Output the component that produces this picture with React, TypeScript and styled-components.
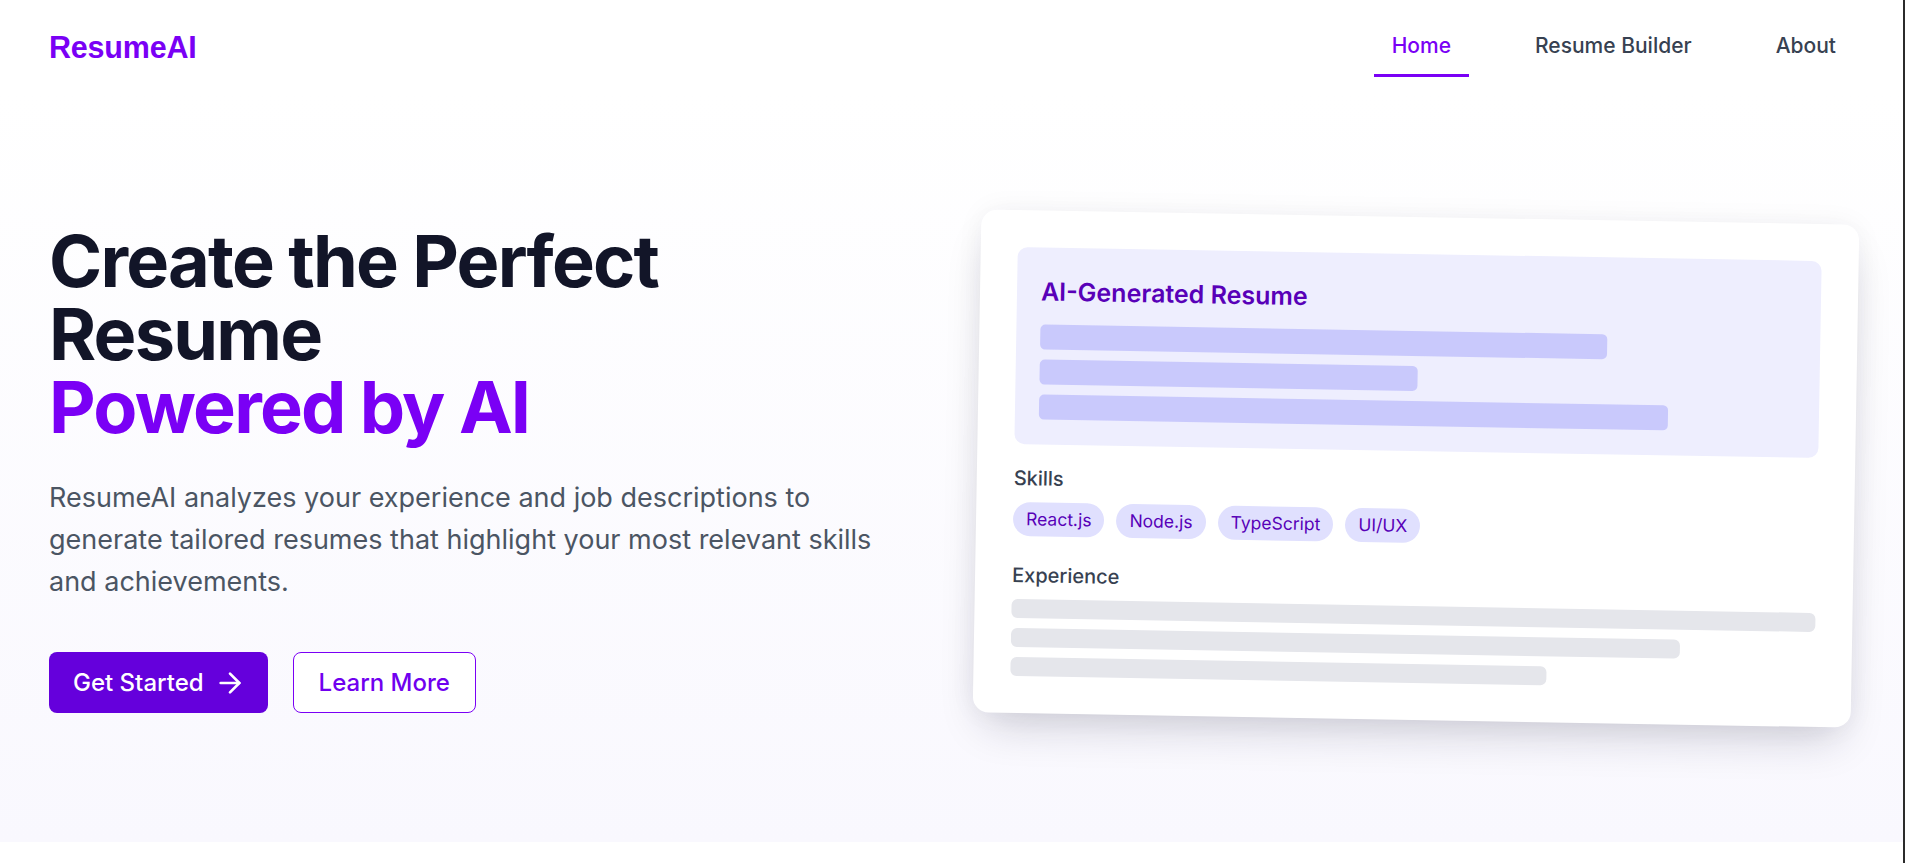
import styled, { createGlobalStyle } from 'styled-components';
import { ArrowRight } from 'lucide-react';

const GlobalStyle = createGlobalStyle`
  html, body {
    margin: 0;
    padding: 0;
    background: #ffffff;
  }
  body {
    font-family: Inter, "Noto Sans", "Liberation Sans", sans-serif;
    -webkit-font-smoothing: antialiased;
  }
  * {
    box-sizing: border-box;
  }
`;

const skills = ['React.js', 'Node.js', 'TypeScript', 'UI/UX'];

export default function App() {
  return (
    <>
      <GlobalStyle />
      <SPage>
        <SHeader>
          <SLogo>ResumeAI</SLogo>
          <SNav>
            <SNavLink $active>Home</SNavLink>
            <SNavLink>Resume Builder</SNavLink>
            <SNavLink>About</SNavLink>
          </SNav>
        </SHeader>

        <SHero>
          <SHeroInner>
            <SIntro>
              <STitle>
                Create the Perfect
                <br />
                Resume
                <br />
                <SAccent>Powered by AI</SAccent>
              </STitle>
              <SLead>
                ResumeAI analyzes your experience and job descriptions to generate tailored resumes
                that highlight your most relevant skills and achievements.
              </SLead>
              <SActions>
                <SPrimary>
                  Get Started
                  <ArrowRight size={32} strokeWidth={2} />
                </SPrimary>
                <SSecondary>Learn More</SSecondary>
              </SActions>
            </SIntro>

            <SPreview>
              <SCard>
                <SPanel>
                  <SPanelTitle>AI-Generated Resume</SPanelTitle>
                  <SBars>
                    <SPanelBar $width="75%" />
                    <SPanelBar $width="50%" />
                    <SPanelBar $width="83.3%" />
                  </SBars>
                </SPanel>

                <SLabel>Skills</SLabel>
                <SChips>
                  {skills.map((s) => (
                    <SChip key={s}>{s}</SChip>
                  ))}
                </SChips>

                <SLabel>Experience</SLabel>
                <SGreyBars>
                  <SGreyBar $width="100%" />
                  <SGreyBar $width="83.3%" />
                  <SGreyBar $width="66.7%" />
                </SGreyBars>
              </SCard>
            </SPreview>
          </SHeroInner>
        </SHero>
      </SPage>
    </>
  );
}

const SPage = styled.div`
  min-height: 100vh;
  border-right: 2px solid #2b2b2b;
  background: #ffffff;
`;

const SHeader = styled.header`
  height: 95px;
  padding: 0 49px;
  display: flex;
  align-items: center;
  justify-content: space-between;
  background: #ffffff;
`;

const SLogo = styled.div`
  font-family: "Liberation Sans", Arial, sans-serif;
  font-weight: 700;
  font-size: 30.5px;
  color: #7a00f5;
  letter-spacing: -0.2px;
`;

const SNav = styled.nav`
  display: flex;
  align-items: center;
  gap: 48px;
`;

const SNavLink = styled.a<{ $active?: boolean }>`
  padding: 14px 18px;
  font-size: 21px;
  line-height: 28px;
  font-weight: 500;
  color: ${(p) => (p.$active ? '#7a00f5' : '#374151')};
  border-bottom: 3px solid ${(p) => (p.$active ? '#7a00f5' : 'transparent')};
  cursor: pointer;
`;

const SHero = styled.section`
  padding: 122px 49px;
  background: linear-gradient(to bottom, #ffffff, #f9f8fe);
`;

const SHeroInner = styled.div`
  display: grid;
  grid-template-columns: 1fr 1fr;
  gap: 50px;
  align-items: center;
`;

const SIntro = styled.div`
  display: flex;
  flex-direction: column;
`;

const STitle = styled.h1`
  margin: 0 0 34px;
  font-size: 72px;
  line-height: 73px;
  font-weight: 700;
  letter-spacing: -0.025em;
  color: #121528;
`;

const SAccent = styled.span`
  color: #7a00f5;
`;

const SLead = styled.p`
  margin: 0 0 49px;
  max-width: 860px;
  font-size: 27px;
  line-height: 42px;
  color: #4b5563;
`;

const SActions = styled.div`
  display: flex;
  gap: 25px;
`;

const SPrimary = styled.button`
  display: inline-flex;
  align-items: center;
  gap: 10px;
  height: 61px;
  padding: 0 22px 0 24px;
  border: none;
  border-radius: 8px;
  background: #6500dc;
  color: #ffffff;
  font-family: inherit;
  font-size: 24px;
  font-weight: 500;
  cursor: pointer;
`;

const SSecondary = styled.button`
  height: 61px;
  padding: 0 25px;
  border: 1.5px solid #7a00f5;
  border-radius: 8px;
  background: #ffffff;
  color: #7000ef;
  font-family: inherit;
  font-size: 24px;
  font-weight: 500;
  cursor: pointer;
`;

const SPreview = styled.div`
  display: flex;
`;

const SCard = styled.div`
  flex: 1;
  padding: 37px;
  background: #ffffff;
  border-radius: 16px;
  box-shadow: 0 22px 45px -12px rgba(20, 20, 50, 0.2), 0 0 28px rgba(20, 20, 50, 0.05);
  transform: rotate(1deg);
`;

const SPanel = styled.div`
  padding: 27px 24px 25px;
  margin-bottom: 20px;
  background: #eeeefe;
  border-radius: 10px;
`;

const SPanelTitle = styled.div`
  margin-bottom: 15px;
  font-size: 25px;
  line-height: 35px;
  font-weight: 600;
  color: #5800b8;
`;

const SBars = styled.div`
  display: flex;
  flex-direction: column;
  gap: 10px;
`;

const SPanelBar = styled.div<{ $width: string }>`
  width: ${(p) => p.$width};
  height: 25px;
  border-radius: 5px;
  background: #c9c9fc;
`;

const SLabel = styled.div`
  margin-bottom: 10px;
  font-size: 20px;
  line-height: 28px;
  font-weight: 500;
  color: #374151;
`;

const SChips = styled.div`
  display: flex;
  gap: 12px;
  margin-bottom: 25px;
`;

const SChip = styled.span`
  padding: 5px 13px;
  border-radius: 999px;
  background: #e0e0fe;
  color: #5800b8;
  font-size: 17.5px;
  line-height: 24px;
`;

const SGreyBars = styled.div`
  display: flex;
  flex-direction: column;
  gap: 10px;
  margin-top: 4px;
`;

const SGreyBar = styled.div<{ $width: string }>`
  width: ${(p) => p.$width};
  height: 19px;
  border-radius: 6px;
  background: #e5e6eb;
`;
